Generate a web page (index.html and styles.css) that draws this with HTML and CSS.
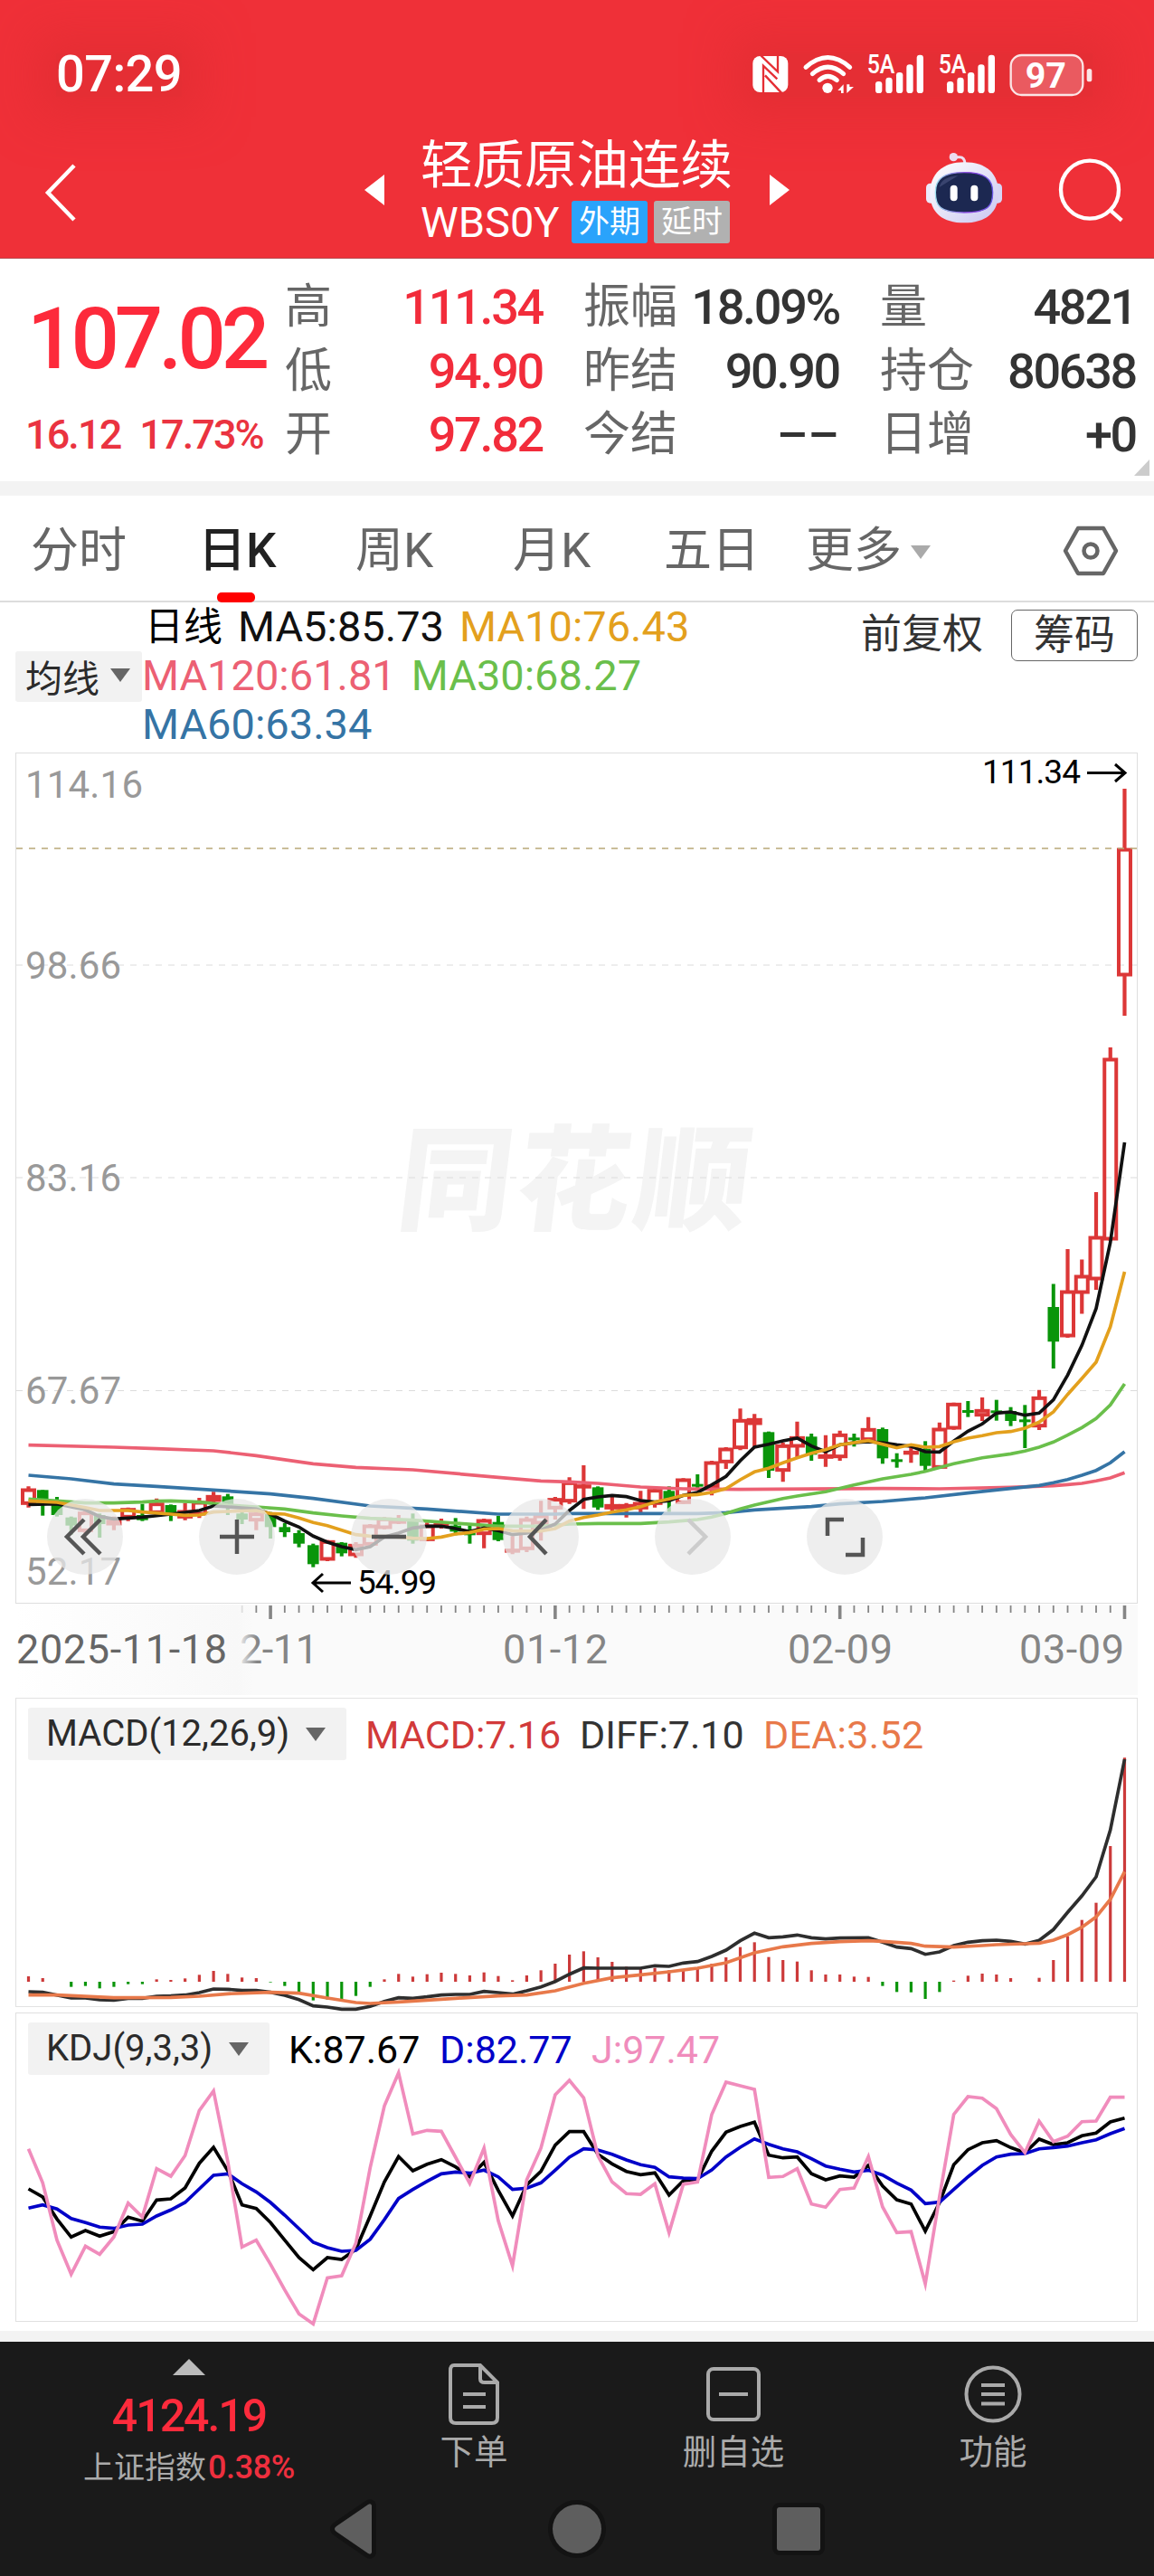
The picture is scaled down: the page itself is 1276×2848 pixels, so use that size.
FILE: index.html
```html
<!DOCTYPE html>
<html lang="zh-CN">
<head>
    <meta charset="UTF-8">
    <meta name="viewport" content="width=device-width, initial-scale=1.0">
    <title>轻质原油连续 WBS0Y</title>
    <link rel="stylesheet" href="styles.css">
</head>
<body>
    <header class="header">
        <div class="status-bar">
            <div class="clock">07:29</div>
            <div class="status-icons">
                <svg width="376" height="48" viewBox="50 57 1128 144">
                    <!-- NFC -->
                    <rect x="51" y="66" width="117" height="120" rx="24" fill="#fff"/>
                    <path d="M78 64 L134 118 V64 M86 188 V98 L132 142 M92 130 L146 188" stroke="#e52e34" stroke-width="7" fill="none"/>
                    <!-- wifi -->
                    <g fill="none" stroke="#fff" stroke-width="15" stroke-linecap="round">
                        <path d="M227 103 Q300 38 373 103"/>
                        <path d="M249 125 Q300 80 352 125"/>
                        <path d="M272 146 Q300 120 330 146"/>
                    </g>
                    <circle cx="299" cy="172" r="17" fill="#fff"/>
                    <path d="M333 180 L352 160 V189 H344 V180 Z M363 160 V189 L386 168 H372 V160 Z" fill="#fff"/>
                    <!-- signal bars -->
                    <g fill="#fff">
                        <text class="net-type" x="430" y="124" textLength="92" lengthAdjust="spacingAndGlyphs">5A</text>
                        <rect x="458" y="150" width="22" height="39" rx="10"/>
                        <rect x="492" y="137" width="22" height="52" rx="10"/>
                        <rect x="527" y="120" width="22" height="69" rx="10"/>
                        <rect x="561" y="94" width="22" height="95" rx="10"/>
                        <rect x="595" y="62" width="22" height="127" rx="10"/>
                        <text class="net-type" x="667" y="124" textLength="92" lengthAdjust="spacingAndGlyphs">5A</text>
                        <rect x="695" y="150" width="22" height="39" rx="10"/>
                        <rect x="729" y="137" width="22" height="52" rx="10"/>
                        <rect x="764" y="120" width="22" height="69" rx="10"/>
                        <rect x="798" y="94" width="22" height="95" rx="10"/>
                        <rect x="832" y="62" width="22" height="127" rx="10"/>
                    </g>
                    <!-- battery -->
                    <rect x="907" y="63" width="239" height="132" rx="36" fill="#ea5a60" stroke="#fbe4e5" stroke-width="7"/>
                    <rect x="1159" y="108" width="17" height="43" rx="8" fill="#fbe4e5"/>
                    <text class="battery-text" x="955" y="172" textLength="136" lengthAdjust="spacingAndGlyphs">97</text>
                </svg>
            </div>
        </div>
        <div class="nav-bar">
            <svg class="back" width="40" height="66" viewBox="0 0 40 66"><path d="M36 3 L7 33 L36 63" fill="none" stroke="#fff" stroke-width="4.5"/></svg>
            <svg class="prev" width="22" height="34" viewBox="0 0 22 34"><path d="M22 0 V34 L0 17 Z" fill="#fff"/></svg>
            <div class="title-box">
                <h1 class="title">轻质原油连续</h1>
                <div class="subtitle">
                    <span class="code">WBS0Y</span>
                    <span class="badge badge-blue">外期</span>
                    <span class="badge badge-gray">延时</span>
                </div>
            </div>
            <svg class="next" width="22" height="34" viewBox="0 0 22 34"><path d="M0 0 V34 L22 17 Z" fill="#fff"/></svg>
            <svg class="robot" width="88" height="80" viewBox="618 380 264 240">
                <defs>
                    <linearGradient id="head" x1="0" y1="0" x2="1" y2="1">
                        <stop offset="0" stop-color="#ffffff"/>
                        <stop offset="0.5" stop-color="#e6e4f8"/>
                        <stop offset="1" stop-color="#c9c6f0"/>
                    </linearGradient>
                    <linearGradient id="rim" x1="0" y1="0" x2="1" y2="0">
                        <stop offset="0" stop-color="#9fe0ef"/>
                        <stop offset="0.6" stop-color="#8a3fe0"/>
                        <stop offset="1" stop-color="#6a5ae8"/>
                    </linearGradient>
                </defs>
                <path d="M715 400 H735 Q752 400 753 422" fill="none" stroke="#eddff0" stroke-width="9"/>
                <circle cx="715" cy="400" r="14" fill="#ecdcf0"/>
                <rect x="624" y="487" width="30" height="66" rx="14" fill="#ebe9fa"/>
                <rect x="846" y="487" width="30" height="66" rx="14" fill="#d6d6f6"/>
                <path d="M750 417 C825 417 864 455 864 520 C864 585 820 618 750 618 C680 618 637 585 637 520 C637 455 680 417 750 417 Z" fill="url(#head)"/>
                <path d="M750 451 C818 451 845 472 845 517 C845 563 830 584 750 584 C670 584 655 563 655 517 C655 472 682 451 750 451 Z" fill="#1c2851" stroke="url(#rim)" stroke-width="4"/>
                <path d="M668 500 Q675 466 730 462 Q700 480 668 500 Z" fill="#46507c" opacity="0.7"/>
                <rect x="704" y="493" width="24" height="53" rx="12" fill="#fff"/>
                <rect x="772" y="493" width="24" height="53" rx="12" fill="#fff"/>
            </svg>
            <svg class="search" width="72" height="72" viewBox="1060 398 216 216">
                <circle cx="1165" cy="505" r="96" fill="none" stroke="#fff" stroke-width="13"/>
                <path d="M1233 573 L1271 607" stroke="#fff" stroke-width="13"/>
            </svg>
        </div>
    </header>

    <section class="quote">
        <div class="price-box">
            <div class="price">107.02</div>
            <div class="change"><span>16.12</span><span>17.73%</span></div>
        </div>
        <div class="stats">
            <div class="stat"><span>高</span><b class="up">111.34</b></div>
            <div class="stat"><span>振幅</span><b>18.09%</b></div>
            <div class="stat"><span>量</span><b>4821</b></div>
            <div class="stat"><span>低</span><b class="up">94.90</b></div>
            <div class="stat"><span>昨结</span><b>90.90</b></div>
            <div class="stat"><span>持仓</span><b>80638</b></div>
            <div class="stat"><span>开</span><b class="up">97.82</b></div>
            <div class="stat"><span>今结</span><b class="none">––</b></div>
            <div class="stat"><span>日增</span><b>+0</b></div>
        </div>
        <div class="corner"></div>
    </section>

    <nav class="tabs">
        <span class="tab">分时</span>
        <span class="tab active">日K</span>
        <span class="tab">周K</span>
        <span class="tab">月K</span>
        <span class="tab">五日</span>
        <span class="tab more">更多<i class="caret light"></i></span>
        <svg class="setting" width="62" height="56" viewBox="0 0 62 56">
            <path d="M17 3 H45 L59 28 L45 53 H17 L3 28 Z" fill="none" stroke="#666" stroke-width="4.5" stroke-linejoin="round"/>
            <circle cx="31" cy="28" r="7.5" fill="none" stroke="#666" stroke-width="4.5"/>
        </svg>
    </nav>

    <section class="legend">
        <div class="chip ma-chip">均线<i class="caret"></i></div>
        <div class="ma-list">
            <div><span class="period">日线</span><span class="ma5">MA5:85.73</span><span class="ma10">MA10:76.43</span></div>
            <div><span class="ma120">MA120:61.81</span><span class="ma30">MA30:68.27</span></div>
            <div><span class="ma60">MA60:63.34</span></div>
        </div>
        <div class="adjust">前复权</div>
        <div class="chips-btn">筹码</div>
    </section>

    <section class="kline">
        <svg id="kline" width="1276" height="942" viewBox="0 832 1276 942">
            <rect x="17.5" y="832.5" width="1240" height="940" fill="none" stroke="#dedede"/>
            <text class="watermark" transform="translate(436 1350) skewX(-7)" textLength="388">同花顺</text>
            <g stroke="#dcdcdc" stroke-width="1.2" stroke-dasharray="7 7">
                <path d="M18 1067H1257M18 1302H1257M18 1537.5H1257"/>
            </g>
            <g class="y-label">
                <text x="28" y="882" textLength="130">114.16</text>
                <text x="28" y="1082" textLength="106">98.66</text>
                <text x="28" y="1317" textLength="106">83.16</text>
                <text x="28" y="1552" textLength="106">67.67</text>
                <text x="28" y="1752" textLength="106">52.17</text>
            </g>
            <g id="candles"></g>
            <path d="M18 938H1257" stroke="#b9a878" stroke-width="1.6" stroke-dasharray="7 7"/>
            <g id="ma-lines"></g>
            <g class="mark">
                <text x="1086" y="866" textLength="109">111.34</text>
                <path d="M1202 854.5H1244M1233 845L1244 854.5L1233 864"/>
                <text x="395" y="1762" textLength="88">54.99</text>
                <path d="M388 1750H346M357 1740L346 1750L357 1760"/>
            </g>
        </svg>
        <div class="tools">
            <span class="tool"><svg viewBox="0 0 84 84"><path d="M41 23L22 42L41 61M59 23L40 42L59 61"/></svg></span>
            <span class="tool"><svg viewBox="0 0 84 84"><path d="M42 23V61M23 42H61"/></svg></span>
            <span class="tool"><svg viewBox="0 0 84 84"><path d="M23 42H61"/></svg></span>
            <span class="tool"><svg viewBox="0 0 84 84"><path d="M48 23L30 42L48 61"/></svg></span>
            <span class="tool disabled"><svg viewBox="0 0 84 84"><path d="M37 23L56 42L37 61"/></svg></span>
            <span class="tool"><svg viewBox="0 0 84 84"><path d="M41 23H23V41M43 62H62V43"/></svg></span>
        </div>
    </section>

    <section class="axis">
        <svg width="1241" height="100" viewBox="17 1774 1241 100">
            <defs>
                <linearGradient id="fade">
                    <stop offset="0" stop-color="#fff"/>
                    <stop offset="0.92" stop-color="#f8f8f8"/>
                    <stop offset="1" stop-color="#fafafa" stop-opacity="0"/>
                </linearGradient>
            </defs>
            <g id="ticks"></g>
            <g class="date">
                <text x="240" y="1839" textLength="112">12-11</text>
                <text x="556" y="1839" textLength="116">01-12</text>
                <text x="871" y="1839" textLength="116">02-09</text>
                <text x="1127" y="1839" textLength="116">03-09</text>
            </g>
            <rect x="17" y="1774" width="267" height="100" fill="url(#fade)"/>
            <text class="date first" x="18" y="1839" textLength="233">2025-11-18</text>
        </svg>
    </section>

    <section class="panel macd">
        <svg id="macd" width="1276" height="341" viewBox="0 1877 1276 341"></svg>
        <div class="panel-head">
            <span class="chip">MACD(12,26,9)<i class="caret"></i></span>
            <span class="v-macd">MACD:7.16</span>
            <span class="v-diff">DIFF:7.10</span>
            <span class="v-dea">DEA:3.52</span>
        </div>
    </section>

    <section class="panel kdj">
        <svg id="kdj" width="1276" height="342" viewBox="0 2225 1276 342"></svg>
        <div class="panel-head">
            <span class="chip">KDJ(9,3,3)<i class="caret"></i></span>
            <span class="v-k">K:87.67</span>
            <span class="v-d">D:82.77</span>
            <span class="v-j">J:97.47</span>
        </div>
    </section>

    <footer class="footer">
        <div class="actions">
            <div class="index-box">
                <svg width="36" height="18" viewBox="0 0 36 18"><path d="M18 0L36 18H0Z" fill="#bbb"/></svg>
                <div class="index-price">4124.19</div>
                <div class="index-name">上证指数<span>0.38%</span></div>
            </div>
            <div class="action order">
                <svg width="60" height="68" viewBox="0 0 60 68"><path d="M8 2H37L56 21V60Q56 66 50 66H10Q4 66 4 60V8Q4 2 8 2ZM37 2V17Q37 21 42 21H56M18 34H43M18 48H43"/></svg>
                <span>下单</span>
            </div>
            <div class="action remove">
                <svg width="62" height="68" viewBox="0 0 62 68"><rect x="3" y="6" width="56" height="56" rx="6"/><path d="M15 34H47"/></svg>
                <span>删自选</span>
            </div>
            <div class="action func">
                <svg width="64" height="68" viewBox="0 0 64 68"><circle cx="32" cy="34" r="29.5"/><path d="M19 24H45M19 34H45M19 44.500H45"/></svg>
                <span>功能</span>
            </div>
        </div>
        <div class="sys-nav">
            <svg width="60" height="70" viewBox="0 0 60 70"><path d="M49 9V61Q48 64 45 62L10 38Q6 35 10 32L45 8Q48 6 49 9Z"/></svg>
            <svg width="66" height="70" viewBox="0 0 66 70"><circle cx="33" cy="35" r="27"/></svg>
            <svg width="60" height="70" viewBox="0 0 60 70"><rect x="6" y="11" width="48" height="48" rx="3"/></svg>
        </div>
    </footer>
    <script src="script.js"></script>
</body>
</html>
```

FILE: styles.css
```css
* {
    box-sizing: border-box;
}
body {
    margin: 0;
    width: 1276px;
    background-color: #fff;
    font-family: Roboto, "Noto Sans CJK SC", sans-serif;
    color: #333;
}
svg {
    display: block;
    flex-shrink: 0;
    overflow: visible;
}

/* header */
.header {
    height: 286px;
    background-color: #ef3038;
    border-bottom: 1px solid #b8474c;
    color: #fff;
    overflow: hidden;
}
.status-bar {
    display: flex;
    justify-content: space-between;
    padding: 59px 68px 0 62px;
    height: 140px;
}
.clock {
    height: 48px;
    line-height: 46px;
    font-size: 56px;
    font-weight: 500;
    letter-spacing: -0.6px;
    background-color: #e52e34;
    box-shadow: 0 0 50px 22px #e52e34;
}
.status-icons {
    height: 48px;
    background-color: #e52e34;
    box-shadow: 0 0 50px 22px #e52e34;
}
.net-type {
    font-size: 86px;
    font-weight: 500;
}
.battery-text {
    font-size: 116px;
    font-weight: 700;
    fill: #fff;
}
.nav-bar {
    display: flex;
    height: 144px;
}
.back {
    margin: 40px 0 0 46px;
}
.prev {
    margin: 53px 0 0 317px;
}
.title-box {
    width: 349px;
    margin-left: 40px;
}
.title {
    margin: 7px 0 0;
    font-size: 57.5px;
    font-weight: 400;
    line-height: 74px;
    white-space: nowrap;
}
.subtitle {
    display: flex;
    align-items: center;
    height: 48px;
}
.code {
    width: 172px;
    font-size: 47px;
}
.badge {
    flex-shrink: 0;
    width: 84px;
    height: 47px;
    margin-right: 7px;
    border-radius: 3px;
    font-size: 34px;
    line-height: 47px;
    text-align: center;
}
.badge-blue {
    background-color: #2aa3fb;
}
.badge-gray {
    background-color: #b1b1b1;
}
.next {
    margin: 53px 0 0 37px;
}
.robot {
    margin: 27px 0 0 149px;
}
.search {
    margin: 34px 0 0 60px;
}

/* quote */
.quote {
    position: relative;
    display: flex;
    height: 246px;
    padding-top: 15px;
}
.price-box {
    width: 315px;
    color: #fd2a3b;
}
.price {
    height: 114px;
    margin-top: 17px;
    padding-left: 30px;
    font-size: 94px;
    font-weight: 500;
    line-height: 114px;
    letter-spacing: -5px;
}
.change {
    display: flex;
    gap: 21px;
    margin-top: 22px;
    padding-left: 28px;
    font-size: 45px;
    font-weight: 500;
    line-height: 54px;
    letter-spacing: -1.9px;
    color: #ea3340;
}
.stats {
    display: grid;
    grid-template-columns: 285px 283px 283px;
    grid-auto-rows: 70.5px;
    column-gap: 45px;
    padding-top: 4px;
}
.stat {
    display: flex;
    justify-content: space-between;
    align-items: center;
    color: #666;
    font-size: 52px;
    line-height: 70px;
}
.stat b {
    color: #333;
    font-size: 54px;
    font-weight: 500;
    letter-spacing: -2.3px;
}
.stat .up {
    color: #f22c3b;
}
.stat .none {
    letter-spacing: 0;
}
.corner {
    position: absolute;
    right: 5px;
    bottom: 6px;
    border-left: 17px solid transparent;
    border-bottom: 18px solid #ccc;
}

/* tabs */
.tabs {
    display: flex;
    align-items: center;
    height: 134px;
    padding: 5px 39px 0 34px;
    border-top: 16px solid #f3f3f3;
    border-bottom: 2px solid #ddd;
    font-size: 53px;
    color: #666;
}
.tab {
    position: relative;
    width: 106px;
    margin-right: 68px;
    line-height: 116px;
    white-space: nowrap;
}
.tab:nth-child(1) {
    margin-right: 79px;
}
.tab:nth-child(4) {
    margin-right: 61px;
}
.tab:nth-child(5) {
    margin-right: 51px;
}
.tab.active {
    color: #222;
    font-weight: 500;
}
.tab.active::after {
    content: "";
    position: absolute;
    left: 21px;
    bottom: 1px;
    width: 42px;
    height: 11px;
    border-radius: 5px;
    background-color: #f00;
}
.tab.more {
    display: flex;
    align-items: center;
    width: 140px;
    margin-right: auto;
}
.caret {
    display: inline-block;
    border: 11px solid transparent;
    border-top: 15px solid #666;
    border-bottom: 0;
}
.caret.light {
    margin: 4px 0 0 10px;
    border-top-color: #aaa;
}

/* MA legend */
.legend {
    display: flex;
    height: 166px;
    padding-left: 17px;
}
.chip {
    display: flex;
    align-items: center;
    justify-content: space-between;
    background-color: #f2f2f2;
    border-radius: 3px;
    color: #2b2b2b;
    font-size: 40px;
}
.ma-chip {
    width: 140px;
    height: 56px;
    margin: 54px 0 0;
    padding: 0 13px 3px 11px;
    font-size: 41px;
}
.ma-list {
    width: 795px;
    font-size: 47px;
    line-height: 54px;
    white-space: nowrap;
}
.ma-list > div {
    display: flex;
    gap: 17px;
    height: 54px;
}
.period {
    margin-left: 3px;
    font-size: 43px;
    color: #000;
}
.ma5 {
    color: #111;
}
.ma10 {
    color: #e3a01d;
}
.ma120 {
    color: #ec6073;
}
.ma30 {
    color: #6abf4b;
}
.ma60 {
    color: #3574a5;
}
.adjust {
    width: 166px;
    padding-top: 7px;
    font-size: 45px;
    line-height: 58px;
}
.chips-btn {
    width: 140px;
    height: 57px;
    margin-top: 8px;
    border: 1.5px solid #666;
    border-radius: 7px;
    font-size: 45px;
    line-height: 56px;
    text-align: center;
}

/* k-line chart */
.kline {
    position: relative;
    height: 942px;
}
.watermark {
    font-family: "Noto Sans CJK SC", sans-serif;
    font-size: 126px;
    font-weight: 900;
    fill: #f4f4f4;
}
.y-label {
    font-size: 42px;
    fill: #999;
}
.mark text {
    font-size: 37px;
    fill: #000;
}
.mark path {
    fill: none;
    stroke: #000;
    stroke-width: 3;
}
.tools {
    position: absolute;
    left: 52px;
    bottom: 33px;
    display: flex;
    gap: 84px;
}
.tool {
    width: 84px;
    height: 84px;
    border-radius: 50%;
    background-color: rgba(232, 232, 232, 0.75);
}
.tool path {
    fill: none;
    stroke: #555;
    stroke-width: 4.5;
}
.tool.disabled path {
    stroke: #ccc;
}

.axis {
    height: 100px;
    margin: 0 18px 3px 17px;
    background-color: #fafafa;
}
.date {
    font-size: 45px;
    fill: #858585;
}
.date.first {
    fill: #666;
}

/* indicator panels */
.panel {
    display: grid;
}
.panel > * {
    grid-area: 1 / 1;
}
.macd {
    height: 341px;
    margin-bottom: 7px;
}
.kdj {
    height: 342px;
    margin-bottom: 10px;
}
.panel-head {
    display: flex;
    height: 58px;
    margin: 11px 0 0 31px;
    font-size: 43px;
    line-height: 60px;
    white-space: nowrap;
}
.panel-head .chip {
    width: 352px;
    height: 58px;
    margin-right: 21px;
    padding: 0 23px 0 20px;
}
.kdj .panel-head .chip {
    width: 267px;
}
.v-macd {
    width: 237px;
    color: #d23a3a;
}
.v-diff {
    width: 203px;
    color: #333;
}
.v-dea {
    letter-spacing: 0.3px;
    color: #e8794a;
}
.v-k {
    width: 167px;
    color: #000;
}
.v-d {
    width: 168px;
    color: #0000c8;
}
.v-j {
    color: #f08cbc;
}

/* footer */
.footer {
    height: 271px;
    border-top: 12px solid #f3f3f3;
    background-color: #1a1a1a;
    color: #aaa;
}
.actions {
    display: flex;
    height: 172px;
}
.index-box {
    display: flex;
    flex-direction: column;
    align-items: center;
    width: 418px;
    padding-top: 19px;
}
.index-price {
    margin-top: 15px;
    font-size: 50px;
    font-weight: 500;
    line-height: 60px;
    letter-spacing: -2px;
    color: #fd2b3c;
}
.index-name {
    font-size: 34px;
    line-height: 54px;
}
.index-name span {
    margin-left: 2px;
    font-size: 36px;
    font-weight: 500;
    letter-spacing: -0.4px;
    color: #ee2f3e;
}
.action {
    display: flex;
    flex-direction: column;
    align-items: center;
    width: 212px;
    padding-top: 24px;
    font-size: 37.5px;
    line-height: 60px;
}
.action path,
.action rect,
.action circle {
    fill: none;
    stroke: #aaa;
    stroke-width: 4;
}
.action.remove {
    width: 362px;
}
.sys-nav {
    display: flex;
    padding-left: 362px;
    height: 70px;
}
.sys-nav path,
.sys-nav circle,
.sys-nav rect {
    fill: #5e5e5e;
    stroke: #131313;
    stroke-width: 10;
    paint-order: stroke;
}
.sys-nav svg + svg {
    margin-left: 183px;
}
.sys-nav svg + svg + svg {
    margin-left: 182px;
}
```

FILE: script.js
```javascript
const NS = 'http://www.w3.org/2000/svg';
const X0 = 31.5;
const STEP = 15.74;

function add(parent, tag, attrs) {
    const el = document.createElementNS(NS, tag);
    for (const k in attrs) el.setAttribute(k, attrs[k]);
    parent.appendChild(el);
    return el;
}

function xOf(i) {
    return X0 + STEP * i;
}

// points: [index, y] pairs, y = base + v / 3
function line(parent, points, color, width, base) {
    const pts = points.map(p => xOf(p[0]).toFixed(1) + ',' + (base + p[1] / 3).toFixed(1)).join(' ');
    add(parent, 'polyline', { points: pts, fill: 'none', stroke: color, 'stroke-width': width, 'stroke-miterlimit': 6 });
}

function series(values) {
    return values.map((v, i) => [i, v]);
}

// candles: direction, high, body top, body bottom, low
const left = `r 250 258 310 320|g 262 262 297 347|g 285 308 345 350|g 350 353 380 410|r 330 335 400 405|g 340 345 375 420
|r 350 362 378 395|r 320 323 355 365|g 308 345 362 365|r 290 305 340 345|g 310 312 340 365|r 305 330 355 362|r 288 300 345 355
|r 268 280 300 305|g 275 283 310 345|g 330 340 360 375|r 330 338 365 395|g 335 340 385 423|g 372 385 402 418|g 395 405 440 452
|g 440 445 508 518|r 428 430 495 498|g 435 437 472 482|r 435 442 480 487|r 375 378 445 450|r 352 355 390 392|r 345 362 363 375
|g 340 365 430 440|r 370 378 430 432|r 357 370 385 390|g 355 380 400 412|g 380 400 412 440|r 357 360 410 455|g 348 368 428 432
|r 415 458 458 475|r 350 357 460 468|r 298 345 375 430|r 285 290 325 360|r 220 235 302 308`;
const right = `r 360 425 425 505|g 430 433 500 508|r 465 490 505 512|r 485 490 505 533|r 445 483 505 520|r 430 440 490 500
|g 430 445 475 515|r 403 405 487 489|g 390 422 430 440|r 345 348 435 460|r 300 303 352 372|r 172 208 305 310|r 190 205 225 300
|g 248 250 378 402|r 285 292 380 415|r 215 265 300 335|g 255 265 325 345|r 260 325 337 365|r 245 256 335 345|g 255 268 276 298
|r 200 238 278 280|g 235 240 337 355|g 320 340 346 368|r 290 313 323 352|g 280 305 362 378|r 218 237 370 372|r 152 154 240 242
|g 147 177 183 200|r 135 175 197 213|g 143 178 184 212|g 167 180 213 230|g 160 208 216 303|r 110 133 233 243`;
const spike = [
    ['g', 1419.5, 1445, 1483.3, 1513], ['r', 1381, 1427, 1478, 1479], ['r', 1392.5, 1410, 1430, 1452.5],
    ['r', 1318, 1367, 1415, 1426], ['r', 1158, 1170, 1371, 1372], ['r', 872, 938, 1079, 1123]
];

function parse(text, base) {
    return text.split('|').map(s => {
        const p = s.trim().split(' ');
        return [p[0]].concat(p.slice(1).map(v => base + v / 3));
    });
}

const candles = parse(left, 1560).concat(parse(right, 1500), spike);
const cg = document.getElementById('candles');
candles.forEach(([dir, hi, top, bot, lo], i) => {
    const x = xOf(i);
    if (dir === 'g') {
        add(cg, 'rect', { x: x - 2, y: hi, width: 4, height: lo - hi, fill: '#0a950a' });
        add(cg, 'rect', { x: x - 6.3, y: top, width: 12.6, height: Math.max(bot - top, 3), fill: '#0a950a' });
    } else {
        add(cg, 'path', { d: `M${x} ${hi}V${top}M${x} ${bot}V${lo}`, stroke: '#dc3737', 'stroke-width': 4.2 });
        add(cg, 'rect', { x: x - 6.5, y: top + 1.5, width: 13, height: Math.max(bot - top - 3, 0.5), fill: 'none', stroke: '#dc3737', 'stroke-width': 4 });
    }
});

// moving averages, v measured from 1500
const L = 180;
const shift = pts => pts.map(p => [p[0], p[1] + L]);
const mg = document.getElementById('ma-lines');
line(mg, shift([[0,113],[6,120],[9,125],[13,132],[16,148],[20,175],[23,187],[27,195],[33,220],[36,232]]).concat(
    [[38,415],[40,420],[43,432],[46,438],[50,440],[60,437],[64,438],[69,433],[72,428],[73,424],[74,420],[75,412],[76,402],[77,385]]), '#ec6073', 3.7, 1500);
line(mg, shift([[0,213],[3,225],[6,242],[9,250],[13,262],[17,275],[20,290],[24,315],[28,325],[33,342],[37,342]]).concat(
    [[38,520],[42,520],[44,520],[47,520],[49,517],[51,508],[55,497],[57,488],[60,480],[63,468],[66,452],[69,437],[71,427],[72,418],[73,407],[74,393],[75,377],[76,352],[77,315]]), '#3574a5', 3.7, 1500);
line(mg, shift([[0,292],[2,298],[4,305],[6,305],[8,302],[9,299],[10,298],[12,302],[14,312],[16,318],[18,325],[20,338],[22,348],[24,356],[27,362],[30,372],[33,382],[36,382]]).concat(
    [[38,555],[40,553],[43,553],[45,548],[47,540],[48,532],[49,520],[50,505],[51,492],[53,470],[54,462],[56,448],[58,425],[60,405],[62,390],[63,380],[65,355],[67,335],[69,322],[70,313],[71,300],[72,283],[73,260],[74,235],[75,205],[76,160],[77,90]]), '#6abf4b', 3.7, 1500);
line(mg, shift([[0,310],[2,308],[4,328],[5,350],[6,358],[8,352],[10,342],[12,330],[13,315],[14,318],[16,325],[17,342],[18,365],[19,385],[20,415],[21,435],[22,450],[23,460],[24,450],[25,418],[26,405],[27,388],[28,382],[29,382],[30,390],[31,400],[32,388],[33,397],[34,410],[35,405],[36,395],[37,375],[38,330]]).concat(
    [[39,473],[40,465],[41,460],[42,464],[43,477],[44,482],[45,478],[46,460],[47,450],[48,425],[49,397],[50,345],[51,300],[52,290],[53,279],[54,270],[55,296],[56,315],[57,292],[58,285],[59,282],[60,285],[61,292],[62,297],[63,315],[64,316],[65,280],[66,247],[67,223],[68,187],[69,183],[70,194],[71,187],[72,143],[73,61],[74,-38],[75,-160],[76,-379],[77,-711]]), '#111', 3.7, 1500);
line(mg, shift([[0,298],[2,303],[4,320],[5,330],[7,330],[8,335],[10,342],[11,346],[12,345],[13,335],[14,333],[16,330],[17,340],[18,342],[19,355],[20,370],[21,380],[22,395],[23,410],[24,415],[25,416],[26,418],[27,422],[28,423],[29,418],[30,408],[31,403],[32,392],[33,390],[34,397],[36,398],[37,390]]).concat(
    [[38,545],[39,533],[40,525],[41,515],[42,508],[43,497],[44,482],[45,472],[46,460],[47,457],[48,450],[49,437],[50,408],[51,382],[52,370],[53,352],[54,335],[55,320],[56,308],[57,292],[58,285],[59,278],[60,290],[61,302],[62,292],[63,300],[64,298],[65,282],[66,270],[67,262],[68,252],[69,248],[70,237],[71,217],[72,183],[73,125],[74,72],[75,18],[76,-99],[77,-282]]), '#e3a01d', 3.7, 1500);

// date ticks
const tg = document.getElementById('ticks');
for (let i = 0; i < 78; i++) {
    const major = i % 20 === 17;
    add(tg, 'path', { d: `M${xOf(i)} 1775V${major ? 1790 : 1783}`, stroke: '#858585', 'stroke-width': major ? 3.6 : 1.8 });
}

// MACD
const macd = document.getElementById('macd');
add(macd, 'rect', { x: 17.5, y: 1877.5, width: 1240, height: 341, fill: 'none', stroke: '#e2e2e2' });
const bars = [975,981,993,1010,1007,1015,1010,1001,1001,985,987,982,970,957,967,979,981,995,1007,1028,1055,1052,1050,1040,1010,985,967,976,968,963,967,972,962,974,988,972,955,933,903,892,912,927,943,950,947,955,952,948,933,912,878,862,911,921,926,955,969,969,976,977,1007,1027,1028,1050,1027,989,973,966,969,981,993,980,921,842,788,731,543,250];
bars.forEach((v, i) => {
    add(macd, 'path', { d: `M${xOf(i)} 2191V${1860 + v / 3}`, stroke: v > 993 ? '#0a950a' : '#cc3a3a', 'stroke-width': 3.2 });
});
line(macd, [[0,1026],[1,1028],[3,1047],[4,1047],[5,1053],[6,1054],[7,1048],[8,1048],[9,1041],[10,1040],[11,1037],[12,1029],[13,1017],[14,1018],[15,1022],[16,1022],[17,1028],[18,1038],[19,1052],[20,1073],[21,1077],[22,1084],[23,1084],[24,1075],[25,1058],[26,1046],[27,1048],[28,1043],[29,1037],[30,1035],[31,1035],[32,1025],[33,1029],[34,1034],[35,1023],[36,1010],[37,992],[38,968],[39,947],[40,948],[43,948],[44,940],[45,942],[46,931],[47,926],[48,909],[49,888],[50,857],[51,832],[52,847],[53,844],[54,838],[55,847],[56,851],[57,848],[59,847],[60,862],[61,878],[62,883],[63,902],[64,894],[65,873],[66,862],[67,857],[68,855],[69,859],[70,868],[71,856],[72,820],[73,763],[74,708],[75,645],[76,490],[77,255]], '#2e2e2e', 3.7, 1860);
line(macd, [[0,1037],[2,1037],[6,1046],[10,1045],[12,1041],[14,1033],[17,1028],[19,1031],[21,1047],[23,1062],[24,1065],[26,1060],[28,1054],[30,1048],[33,1040],[35,1037],[37,1023],[39,998],[41,980],[43,970],[45,960],[47,948],[49,930],[51,897],[53,877],[55,866],[57,860],[59,857],[60,859],[62,866],[63,875],[65,878],[67,873],[68,870],[70,867],[71,865],[72,855],[73,837],[74,812],[75,778],[76,720],[77,628]], '#e8794a', 3.7, 1860);

// KDJ
const kdj = document.getElementById('kdj');
add(kdj, 'rect', { x: 17.5, y: 2225.5, width: 1240, height: 341, fill: 'none', stroke: '#e0e0e0' });
line(kdj, series([600,627,700,760,738,757,742,694,707,637,633,597,515,462,540,653,665,712,770,828,868,828,834,800,690,577,493,540,518,503,527,560,512,605,690,587,542,455,410,410,485,517,542,553,547,620,573,570,475,412,393,379,488,497,494,550,570,557,561,522,590,636,650,740,645,520,470,447,440,463,480,435,453,447,424,415,378,365]), '#000', 3.7, 2220);
line(kdj, series([664,653,667,698,712,727,731,720,717,690,670,645,600,555,550,583,610,645,687,732,777,795,807,804,767,702,632,602,575,550,544,548,538,560,602,598,580,538,495,467,471,485,504,520,529,560,564,566,537,494,462,434,452,467,477,500,524,535,544,538,554,581,604,649,644,602,560,522,494,485,483,467,463,458,447,437,417,400]), '#0000c8', 3.7, 2220);
line(kdj, series([467,580,770,883,790,817,760,647,693,533,558,490,340,275,510,793,770,850,935,1015,1048,895,888,780,530,325,215,418,406,409,495,582,465,705,855,570,465,288,240,298,490,577,616,618,583,745,585,577,353,246,258,270,562,559,533,650,661,602,597,493,660,745,742,915,625,353,294,299,334,420,480,376,443,425,377,375,296,296]), '#f08cbc', 3.7, 2220);
```
